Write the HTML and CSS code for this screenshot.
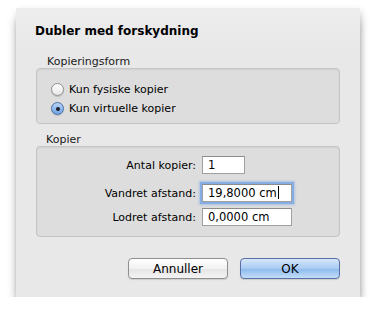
FILE: index.html
```html
<!DOCTYPE html>
<html lang="da">
<head>
<meta charset="UTF-8">
<title>Dubler med forskydning</title>
<link rel="stylesheet" href="styles.css">
</head>
<body>
<div class="dialog">
    <h1 class="title">Dubler med forskydning</h1>

    <div class="group-label">Kopieringsform</div>
    <div class="group radios">
        <label class="radio-row"><span class="radio"></span>Kun fysiske kopier</label>
        <label class="radio-row"><span class="radio checked"></span>Kun virtuelle kopier</label>
    </div>

    <div class="group-label second">Kopier</div>
    <div class="group fields">
        <div class="field row1">
            <span class="field-label">Antal kopier:</span>
            <span class="input short">1</span>
        </div>
        <div class="field row2">
            <span class="field-label">Vandret afstand:</span>
            <span class="input focused">19,8000 cm<span class="caret"></span></span>
        </div>
        <div class="field row3">
            <span class="field-label">Lodret afstand:</span>
            <span class="input">0,0000 cm</span>
        </div>
    </div>

    <div class="buttons">
        <button class="btn">Annuller</button>
        <button class="btn default">OK</button>
    </div>
</div>
</body>
</html>
```

FILE: styles.css
```css
body {
    margin: 0;
    background: #ffffff;
    font-family: "DejaVu Sans", Verdana, sans-serif;
    font-size: 11px;
    color: #000;
}
.dialog {
    margin: 8px 0 0 16px;
    width: 304px;
    height: 289px;
    padding: 0 20px;
    background: linear-gradient(#ededed, #e8e8e8 40px);
    box-shadow: 0 8px 10px -3px rgba(0, 0, 0, 0.6), 2px 2px 6px rgba(0, 0, 0, 0.1);
    overflow: hidden;
}
.title {
    margin: 15px 0 0 -1px;
    font-size: 12px;
    line-height: 16px;
    font-weight: bold;
}
.group-label {
    margin: 16px 0 0 11px;
    line-height: 13px;
    color: #1a1a1a;
}
.group-label.second {
    margin-top: 9px;
    margin-left: 10px;
}
.group {
    border: 1px solid #c4c4c4;
    border-radius: 4px;
    background: #dddddd;
    box-shadow: inset 0 1px 2px rgba(0, 0, 0, 0.06);
}
.radios {
    height: 43px;
    padding: 11px 0 0 14px;
}
.radio-row {
    display: flex;
    align-items: center;
    height: 19px;
}
.radio {
    width: 11px;
    height: 11px;
    margin-right: 5px;
    border: 1px solid #8f8f8f;
    border-radius: 50%;
    background: linear-gradient(#ffffff, #e6e6e6);
    box-shadow: 0 1px 1px rgba(0, 0, 0, 0.15);
    position: relative;
}
.radio.checked {
    border-color: #4a6fa6;
    background: linear-gradient(#b9d3f3, #6ea4e6);
}
.radio.checked::after {
    content: "";
    position: absolute;
    left: 3.5px;
    top: 3.5px;
    width: 4px;
    height: 4px;
    border-radius: 50%;
    background: #1d1d2a;
}
.fields {
    height: 89px;
}
.field {
    display: flex;
    align-items: center;
    height: 18px;
}
.row1 { margin-top: 9px; }
.row2 { margin-top: 10px; }
.row3 { margin-top: 6px; }
.field-label {
    width: 159px;
    text-align: right;
    margin-right: 6px;
}
.input {
    box-sizing: border-box;
    width: 90px;
    height: 18px;
    padding: 0 5px;
    line-height: 16px;
    font-size: 11.5px;
    background: #fff;
    border: 1px solid #a0a0a0;
    border-top-color: #8c8c8c;
}
.input.short {
    width: 43px;
}
.input.focused {
    box-shadow: 0 0 0 2px #86aee4, 0 0 2px 3px rgba(120, 165, 230, 0.45);
}
.caret {
    display: inline-block;
    width: 1px;
    height: 13px;
    margin-left: 1px;
    vertical-align: -2px;
    background: #000;
}
.buttons {
    display: flex;
    justify-content: flex-end;
    gap: 12px;
    margin-top: 21px;
}
.btn {
    width: 100px;
    height: 21px;
    padding: 0;
    font-family: "DejaVu Sans", Verdana, sans-serif;
    font-size: 12px;
    color: #000;
    border: 1px solid #8e8e8e;
    border-radius: 4px;
    background: linear-gradient(#ffffff, #f2f2f2 50%, #e4e4e4 51%, #f4f4f4);
    box-shadow: 0 1px 1px rgba(0, 0, 0, 0.12);
}
.btn.default {
    border-color: #5a6fa3;
    background: linear-gradient(#d6e6fa, #a9cbf2 50%, #8cbaed 51%, #c3ddf8);
}
```
